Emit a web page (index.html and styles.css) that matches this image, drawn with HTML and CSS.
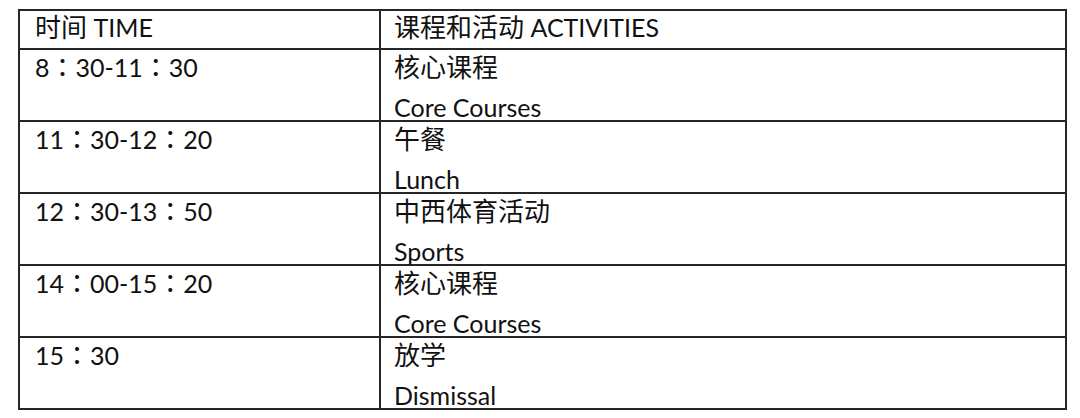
FILE: index.html
```html
<!DOCTYPE html>
<html lang="zh">
<head>
<meta charset="utf-8">
<link rel="stylesheet" href="styles.css">
</head>
<body>
<table class="schedule">
  <colgroup><col class="col-time"><col class="col-act"></colgroup>
  <thead>
    <tr><th><span class="cjk">时间</span> TIME</th><th class="act"><span class="cjk">课程和活动</span> ACTIVITIES</th></tr>
  </thead>
  <tbody>
    <tr>
      <td><div class="line">8<span class="colon">：</span>30-11<span class="colon">：</span>30</div></td>
      <td class="act"><div class="line cjk">核心课程</div><div class="line en">Core Courses</div></td>
    </tr>
    <tr>
      <td><div class="line">11<span class="colon">：</span>30-12<span class="colon">：</span>20</div></td>
      <td class="act"><div class="line cjk">午餐</div><div class="line en">Lunch</div></td>
    </tr>
    <tr>
      <td><div class="line">12<span class="colon">：</span>30-13<span class="colon">：</span>50</div></td>
      <td class="act"><div class="line cjk">中西体育活动</div><div class="line en">Sports</div></td>
    </tr>
    <tr>
      <td><div class="line">14<span class="colon">：</span>00-15<span class="colon">：</span>20</div></td>
      <td class="act"><div class="line cjk">核心课程</div><div class="line en">Core Courses</div></td>
    </tr>
    <tr>
      <td><div class="line">15<span class="colon">：</span>30</div></td>
      <td class="act"><div class="line cjk">放学</div><div class="line en">Dismissal</div></td>
    </tr>
  </tbody>
</table>
</body>
</html>
```
FILE: styles.css
```css
html, body {
  margin: 0;
  padding: 0;
  background: #ffffff;
}
body {
  padding: 9px 0 0 18px;
  font-family: Lato, "Noto Sans CJK SC", sans-serif;
  color: #111111;
}
.schedule {
  border-collapse: collapse;
  width: 1049px;
  table-layout: fixed;
  font-size: 25px;
}
.col-time { width: 361px; }
.schedule th,
.schedule td {
  border: 2px solid #262626;
  padding: 0 0 0 15px;
  text-align: left;
  vertical-align: top;
  font-weight: normal;
}
.schedule .act {
  padding-left: 13px;
}
.schedule th {
  height: 37px;
  line-height: 32px;
}
.schedule td {
  height: 70px;
}
.line {
  line-height: 32px;
}
.cjk {
  font-size: 26px;
}
.line.cjk {
  padding-top: 1px;
}
.colon {
  font-family: "Noto Sans CJK JP", sans-serif;
  font-size: 26px;
}
.en {
  margin-top: 11px;
  line-height: 26px;
}
```
